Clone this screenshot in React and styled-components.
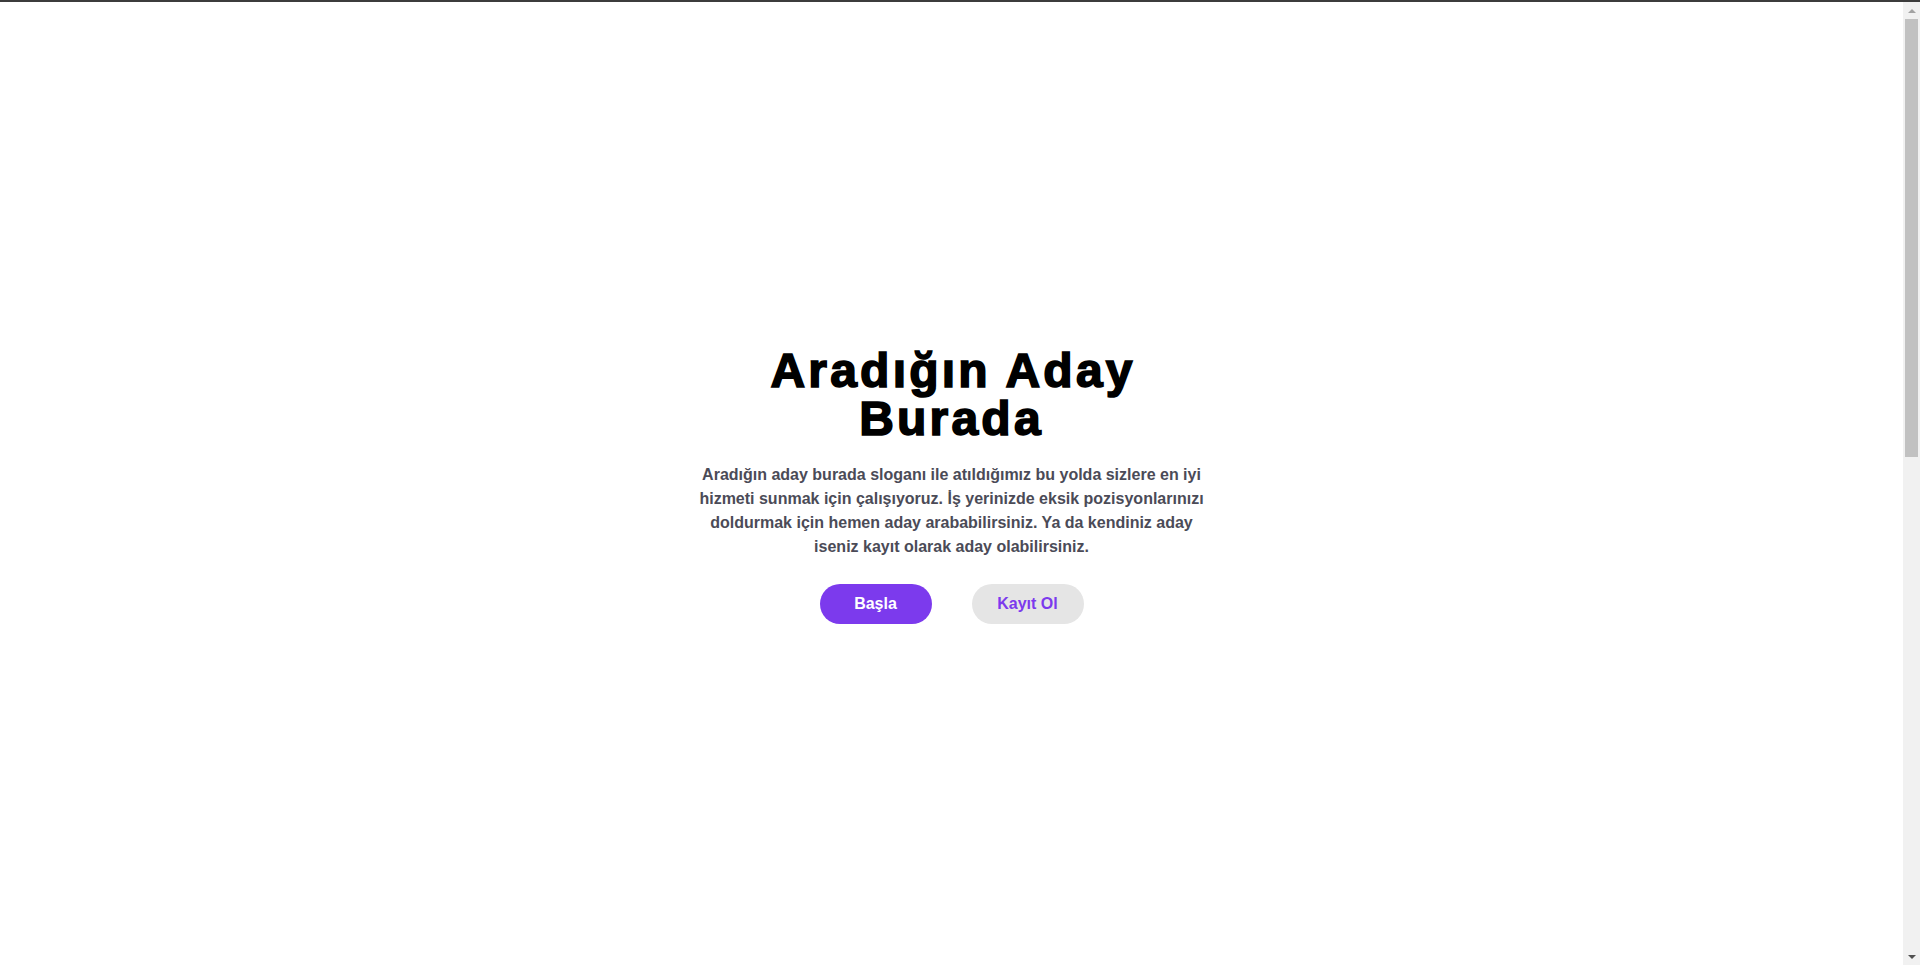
import React from "react";
import styled, { createGlobalStyle } from "styled-components";

const GlobalStyle = createGlobalStyle`
  html, body {
    margin: 0;
    padding: 0;
    background: #ffffff;
  }
  body {
    font-family: "Liberation Sans", Arial, sans-serif;
  }
  * { box-sizing: border-box; }
`;

const Page = styled.div`
  padding-right: 17px;
`;

const TopEdge = styled.div`
  position: fixed;
  top: 0;
  left: 0;
  right: 0;
  height: 2px;
  background: #3c3c3c;
  z-index: 3;
`;

const Rail = styled.div`
  position: fixed;
  top: 2px;
  right: 0;
  bottom: 0;
  width: 17px;
  background: #f1f1f1;
  display: flex;
  flex-direction: column;
  z-index: 2;
`;

const RailButton = styled.div`
  height: 17px;
  flex: none;
  display: flex;
  align-items: center;
  justify-content: center;
`;

const Thumb = styled.div`
  height: 438px;
  margin: 0 2px;
  background: #c1c1c1;
  flex: none;
`;

const RailSpace = styled.div`
  flex: 1;
`;

const Hero = styled.section`
  min-height: 100vh;
  display: flex;
  flex-direction: column;
  align-items: center;
  justify-content: center;
  text-align: center;
  padding-top: 6px;
`;

const Title = styled.h1`
  margin: 0;
  font-family: "Liberation Sans", Arial, sans-serif;
  font-size: 48px;
  line-height: 48px;
  font-weight: 700;
  color: #000;
  letter-spacing: 3.2px;
  text-indent: 3.2px;
  -webkit-text-stroke: 1.6px #000;
  max-width: 440px;
`;

const Lead = styled.p`
  margin: 20px 0 0;
  max-width: 520px;
  font-size: 16px;
  line-height: 24px;
  font-weight: 700;
  color: #4b4b57;
`;

const Actions = styled.div`
  display: flex;
  gap: 40px;
  margin-top: 25px;
`;

const Button = styled.button`
  width: 112px;
  height: 40px;
  border: none;
  border-radius: 20px;
  font-family: "Liberation Sans", Arial, sans-serif;
  font-size: 16px;
  font-weight: 700;
  cursor: pointer;
  background: ${(p) => (p.$primary ? "#7c3aed" : "#e5e5e5")};
  color: ${(p) => (p.$primary ? "#ffffff" : "#7c3aed")};
`;

const Filler = styled.section`
  height: 1086px;
`;

function Arrow({ up, color }) {
  return (
    <svg width="8" height="4" viewBox="0 0 8 4">
      <polygon points={up ? "0,4 4,0 8,4" : "0,0 8,0 4,4"} fill={color} />
    </svg>
  );
}

export default function App() {
  return (
    <>
      <GlobalStyle />
      <TopEdge />
      <Rail>
        <RailButton>
          <Arrow up color="#a3a3a3" />
        </RailButton>
        <Thumb />
        <RailSpace />
        <RailButton>
          <Arrow color="#505050" />
        </RailButton>
      </Rail>
      <Page>
        <Hero>
          <Title>Aradığın Aday Burada</Title>
          <Lead>
            Aradığın aday burada sloganı ile atıldığımız bu yolda sizlere en iyi
            hizmeti sunmak için çalışıyoruz. İş yerinizde eksik pozisyonlarınızı
            doldurmak için hemen aday arababilirsiniz. Ya da kendiniz aday iseniz
            kayıt olarak aday olabilirsiniz.
          </Lead>
          <Actions>
            <Button $primary>Başla</Button>
            <Button>Kayıt Ol</Button>
          </Actions>
        </Hero>
        <Filler />
      </Page>
    </>
  );
}
